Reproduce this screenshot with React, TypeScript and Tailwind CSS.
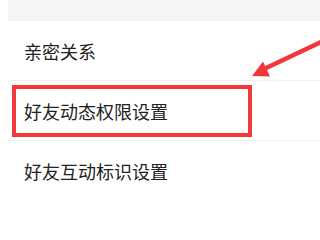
const rows = ["亲密关系", "好友动态权限设置", "好友互动标识设置"];

export default function App() {
  return (
    <div className="relative h-[240px] w-[320px] overflow-hidden bg-white font-['Noto_Sans_CJK_SC',sans-serif] text-[#222]">
      <div className="ml-2 h-[21px] bg-[#f4f5f7]" />
      <div className="pl-2">
        {rows.map((label, i) => (
          <div
            key={label}
            className={
              i < rows.length - 1
                ? "flex h-[60px] items-center border-b border-[#f0f0f0] pl-4 text-[18px] leading-none"
                : "flex h-[60px] items-center pl-4 text-[18px] leading-none"
            }
          >
            {label}
          </div>
        ))}
      </div>

      {/* highlight box */}
      <div className="absolute left-[12px] top-[85px] h-[52px] w-[240px] border-4 border-[#f2373a]" />

      {/* arrow */}
      <svg
        className="absolute left-0 top-0"
        width="320"
        height="240"
        viewBox="0 0 320 240"
      >
        <line x1="321" y1="42" x2="264" y2="69" stroke="#f2373a" strokeWidth="4.5" strokeLinecap="round" />
        <polygon points="252,76 263,61.5 270,76.5" fill="#f2373a" />
      </svg>
    </div>
  );
}
